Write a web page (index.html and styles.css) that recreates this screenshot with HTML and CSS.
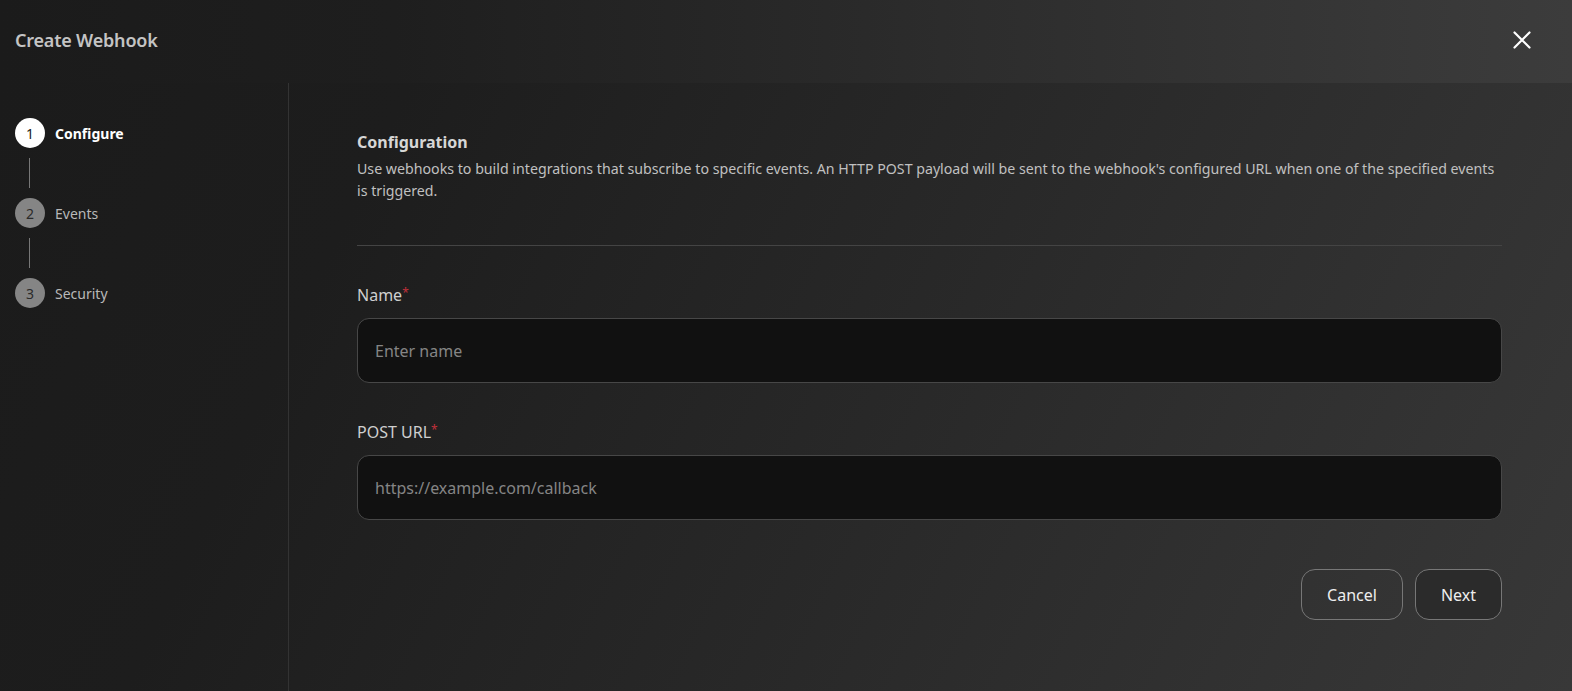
FILE: index.html
```html
<!DOCTYPE html>
<html>
<head>
  <meta charset="utf-8">
  <title>Create Webhook</title>
  <link rel="stylesheet" href="styles.css">
</head>
<body>
  <div class="modal">
    <div class="modal-header">
      <h1>Create Webhook</h1>
      <button class="close-btn" aria-label="Close">
        <svg width="18" height="18" viewBox="0 0 18 18"><path d="M1.5 1.5L16.5 16.5M16.5 1.5L1.5 16.5" stroke="#fff" stroke-width="2.2" stroke-linecap="round"/></svg>
      </button>
    </div>

    <div class="modal-body">
      <div class="steps">
        <div class="step active">
          <span class="step-num">1</span>
          <span class="step-label">Configure</span>
        </div>
        <div class="step-line"></div>
        <div class="step">
          <span class="step-num">2</span>
          <span class="step-label">Events</span>
        </div>
        <div class="step-line"></div>
        <div class="step">
          <span class="step-num">3</span>
          <span class="step-label">Security</span>
        </div>
      </div>

      <div class="content">
        <div class="section-head">
          <h2>Configuration</h2>
          <p>Use webhooks to build integrations that subscribe to specific events. An HTTP POST payload will be sent to the webhook's configured URL when one of the specified events is triggered.</p>
        </div>

        <div class="field">
          <label>Name<span class="req">*</span></label>
          <input type="text" placeholder="Enter name">
        </div>
        <div class="field">
          <label>POST URL<span class="req">*</span></label>
          <input type="text" placeholder="https://example.com/callback">
        </div>

        <div class="actions">
          <button class="btn">Cancel</button>
          <button class="btn btn-next">Next</button>
        </div>
      </div>
    </div>
  </div>
</body>
</html>
```

FILE: styles.css
```css
html, body {
  margin: 0;
  height: 100%;
}
body {
  font-family: "Noto Sans", "Open Sans", Arial, sans-serif;
  background-color: #1c1c1c;
  color: #d0d0d0;
  overflow: hidden;
}
.modal {
  height: 100%;
  display: flex;
  flex-direction: column;
}
.modal-header {
  height: 79px;
  padding: 0 41px 4px 15px;
  display: flex;
  align-items: center;
  justify-content: space-between;
  flex-shrink: 0;
  background: linear-gradient(90deg, #1b1b1b 0%, #1e1e1e 25%, #2c2c2c 60%, #3c3c3c 100%);
}
.modal-header h1 {
  margin: 0;
  font-size: 18px;
  font-weight: 600;
  color: #c4c4c4;
  letter-spacing: -0.2px;
}
.close-btn {
  background: none;
  border: none;
  padding: 0;
  cursor: pointer;
  display: flex;
}
.modal-body {
  flex: 1;
  display: flex;
  background: linear-gradient(115deg, #1b1b1b 0%, #1d1d1d 22%, #282828 55%, #383838 100%);
}
.steps {
  width: 273px;
  padding: 35px 0 0 15px;
  border-right: 1px solid #333;
}
.step {
  display: flex;
  align-items: center;
  gap: 10px;
  height: 30px;
}
.step-num {
  width: 30px;
  height: 30px;
  border-radius: 50%;
  background: #858585;
  color: #2a2a2a;
  font-size: 14px;
  display: flex;
  align-items: center;
  justify-content: center;
}
.step-label {
  font-size: 14px;
  color: #b8b8b8;
}
.step.active .step-num {
  background: #fff;
  color: #222;
}
.step.active .step-label {
  color: #fff;
  font-weight: 700;
}
.step-line {
  width: 1px;
  height: 30px;
  margin: 10px 0 10px 14px;
  background: #777;
}
.content {
  flex: 1;
  padding: 48px 70px 0 68px;
}
.section-head {
  padding-bottom: 43px;
  border-bottom: 1px solid #444;
  margin-bottom: 38px;
}
.section-head h2 {
  margin: 0 0 5px;
  font-size: 16px;
  font-weight: 700;
  color: #d6d6d6;
}
.section-head p {
  margin: 0;
  font-size: 14.2px;
  line-height: 22px;
  color: #c0c0c0;
}
.field {
  margin-bottom: 38px;
}
.field label {
  display: block;
  font-size: 16px;
  color: #cfcfcf;
  margin-bottom: 12px;
}
.req {
  color: #c0303a;
  font-size: 12px;
  vertical-align: top;
}
.field input {
  box-sizing: border-box;
  width: 100%;
  height: 65px;
  padding: 0 17px;
  background: #111;
  border: 1px solid #474747;
  border-radius: 12px;
  font-family: inherit;
  font-size: 16px;
  color: #ddd;
  outline: none;
}
.field input::placeholder {
  color: #858585;
}
.actions {
  display: flex;
  justify-content: flex-end;
  gap: 12px;
  margin-top: 49px;
}
.btn {
  height: 51px;
  padding: 0 25px;
  background: transparent;
  border: 1px solid #777;
  border-radius: 14px;
  font-family: inherit;
  font-size: 16px;
  color: #eee;
  cursor: pointer;
}
.btn-next {
  background: #2b2b2b;
  padding: 0 25px;
}
```
